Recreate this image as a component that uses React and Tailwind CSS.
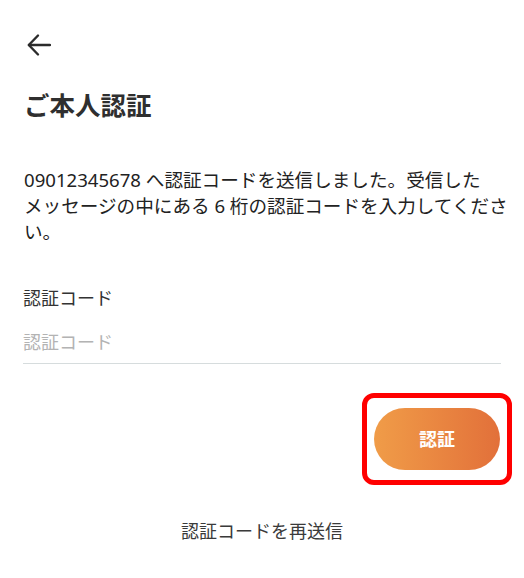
import { useState } from 'react'

const font = { fontFamily: '"Noto Sans", "Noto Sans CJK JP", sans-serif' }

function BackArrow() {
  return (
    <svg width="24" height="24" viewBox="0 0 24 24" fill="none" stroke="#2b2b2b" strokeWidth="2.4" strokeLinecap="round" strokeLinejoin="round">
      <path d="M23 12H2" />
      <path d="M11 2.5L1.8 12l9.2 9.5" />
    </svg>
  )
}

export default function App() {
  const [code, setCode] = useState('')

  return (
    <div className="min-h-[578px] w-full bg-white text-[#222]" style={font}>
      <div className="flex h-[89px] items-center pl-[27px]">
        <button className="flex items-center" aria-label="戻る">
          <BackArrow />
        </button>
      </div>

      <h1 className="px-6 text-[25.5px] font-bold leading-[32px] text-[#2f2f2f]">ご本人認証</h1>

      <p className="mt-[46px] px-6 text-[18.6px] leading-[26px] text-[#222]">
        <span className="block whitespace-nowrap">09012345678 へ認証コードを送信しました。受信した</span>
        <span className="block whitespace-nowrap">メッセージの中にある 6 桁の認証コードを入力してくださ</span>
        <span className="block whitespace-nowrap">い。</span>
      </p>

      <div className="mt-[40px] px-[23px]">
        <label className="block text-[18px] leading-[26px] text-[#333]">認証コード</label>
        <input
          value={code}
          onChange={(e) => setCode(e.target.value)}
          placeholder="認証コード"
          className="mt-[9px] block h-[44px] w-full border-b border-[#d6dcdd] bg-transparent text-[18px] text-[#333] outline-none placeholder:text-[#b3b3b3]"
        />
      </div>

      <div className="mt-[29px] flex justify-end pr-[12px]">
        <div className="flex h-[92px] w-[150px] items-center justify-center rounded-[12px] border-[5px] border-[#ff0000]">
          <button className="h-[62px] w-[126px] rounded-full bg-gradient-to-r from-[#f09c48] to-[#e2703a] text-[18px] font-bold text-white">
            認証
          </button>
        </div>
      </div>

      <div className="mt-[34px] text-center text-[18px] leading-[24px] text-[#3a3a3a]">
        認証コードを再送信
      </div>
    </div>
  )
}
